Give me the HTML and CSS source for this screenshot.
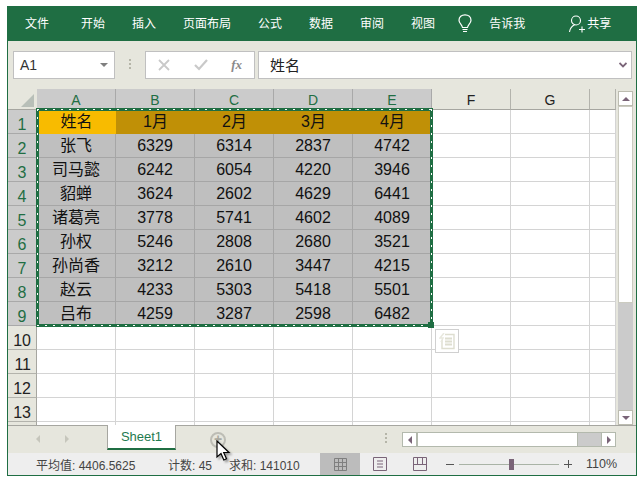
FILE: index.html
```html
<!DOCTYPE html>
<html lang="zh-CN">
<head>
    <meta charset="UTF-8">
    <title>Excel</title>
    <link rel="stylesheet" href="styles.css">
</head>
<body>
<div class="window">
    <!-- ribbon tabs -->
    <div class="ribbon">
        <span class="tab tab-first">文件</span>
        <span class="tab">开始</span>
        <span class="tab">插入</span>
        <span class="tab">页面布局</span>
        <span class="tab">公式</span>
        <span class="tab">数据</span>
        <span class="tab">审阅</span>
        <span class="tab">视图</span>
        <svg class="bulb" width="14" height="20" viewBox="0 0 14 20" fill="none" stroke="#fff" stroke-width="1.2">
            <path d="M4.5 13.5C4 10.5 1 9.5 1 6.2 1 3 3.6 .8 7 .8s6 2.200 6 5.400c0 3.300-3 4.300-3.500 7.300z"/>
            <path d="M4.500 15.500h5M5 17.500h4"/>
        </svg>
        <span class="tab tell">告诉我</span>
        <svg class="person" width="16" height="18" viewBox="0 0 16 18" fill="none" stroke="#fff" stroke-width="1.100">
            <circle cx="7" cy="5.500" r="4.500"/>
            <path d="M.5 17c.5-3.500 2.500-6 5-7M10 14.500h6M13 11.500v6"/>
        </svg>
        <span class="tab share">共享</span>
    </div>

    <!-- formula bar -->
    <div class="formula-bar">
        <div class="name-box"><span>A1</span><i class="caret"></i></div>
        <div class="grip"></div>
        <div class="fx-box">
            <svg width="12" height="12" viewBox="0 0 12 12" fill="none" stroke="#c9c9c9" stroke-width="1.800"><path d="M1 1l10 10M11 1L1 11"/></svg>
            <svg width="14" height="12" viewBox="0 0 14 12" fill="none" stroke="#c9c9c9" stroke-width="2.200"><path d="M1 6l4 4 8-9"/></svg>
            <span class="fx">fx</span>
        </div>
        <div class="formula-input">
            <span>姓名</span>
            <svg width="8" height="6" viewBox="0 0 8 6" fill="none" stroke="#7a6478" stroke-width="1.800"><path d="M.5 1l3.500 3.500L7.500 1"/></svg>
        </div>
    </div>

    <!-- sheet -->
    <div class="sheet-row">
        <div class="sheet">
            <div class="corner"><i></i></div>
            <div class="col-h on">A</div><div class="col-h on">B</div><div class="col-h on">C</div><div class="col-h on">D</div><div class="col-h on">E</div><div class="col-h">F</div><div class="col-h">G</div><div class="col-h"></div>

            <div class="row-h on">1</div><div class="c first">姓名</div><div class="c head">1月</div><div class="c head">2月</div><div class="c head">3月</div><div class="c head">4月</div><div class="e"></div><div class="e"></div><div class="e"></div>
            <div class="row-h on">2</div><div class="c">张飞</div><div class="c">6329</div><div class="c">6314</div><div class="c">2837</div><div class="c">4742</div><div class="e"></div><div class="e"></div><div class="e"></div>
            <div class="row-h on">3</div><div class="c">司马懿</div><div class="c">6242</div><div class="c">6054</div><div class="c">4220</div><div class="c">3946</div><div class="e"></div><div class="e"></div><div class="e"></div>
            <div class="row-h on">4</div><div class="c">貂蝉</div><div class="c">3624</div><div class="c">2602</div><div class="c">4629</div><div class="c">6441</div><div class="e"></div><div class="e"></div><div class="e"></div>
            <div class="row-h on">5</div><div class="c">诸葛亮</div><div class="c">3778</div><div class="c">5741</div><div class="c">4602</div><div class="c">4089</div><div class="e"></div><div class="e"></div><div class="e"></div>
            <div class="row-h on">6</div><div class="c">孙权</div><div class="c">5246</div><div class="c">2808</div><div class="c">2680</div><div class="c">3521</div><div class="e"></div><div class="e"></div><div class="e"></div>
            <div class="row-h on">7</div><div class="c">孙尚香</div><div class="c">3212</div><div class="c">2610</div><div class="c">3447</div><div class="c">4215</div><div class="e"></div><div class="e"></div><div class="e"></div>
            <div class="row-h on">8</div><div class="c">赵云</div><div class="c">4233</div><div class="c">5303</div><div class="c">5418</div><div class="c">5501</div><div class="e"></div><div class="e"></div><div class="e"></div>
            <div class="row-h on">9</div><div class="c">吕布</div><div class="c">4259</div><div class="c">3287</div><div class="c">2598</div><div class="c">6482</div><div class="e"></div><div class="e"></div><div class="e"></div>
            <div class="row-h">10</div><div class="e"></div><div class="e"></div><div class="e"></div><div class="e"></div><div class="e"></div><div class="e"></div><div class="e"></div><div class="e"></div>
            <div class="row-h">11</div><div class="e"></div><div class="e"></div><div class="e"></div><div class="e"></div><div class="e"></div><div class="e"></div><div class="e"></div><div class="e"></div>
            <div class="row-h">12</div><div class="e"></div><div class="e"></div><div class="e"></div><div class="e"></div><div class="e"></div><div class="e"></div><div class="e"></div><div class="e"></div>
            <div class="row-h">13</div><div class="e"></div><div class="e"></div><div class="e"></div><div class="e"></div><div class="e"></div><div class="e"></div><div class="e"></div><div class="e"></div>
            <div class="row-h tail"></div><div class="e tail"></div><div class="e tail"></div><div class="e tail"></div><div class="e tail"></div><div class="e tail"></div><div class="e tail"></div><div class="e tail"></div><div class="e tail"></div>

            <!-- copy marquee and paste options float over the cells -->
            <div class="marquee"><div class="marquee-dash"></div><i class="handle"></i></div>
            <div class="paste-tag">
                <svg width="16" height="17" viewBox="0 0 16 17" fill="none" stroke="#deded0">
                    <path d="M6 1.500h9v14H3V7" stroke-width="1.400"/>
                    <path d="M6 5.500h7M6 8.500h7M6 11.500h7" stroke-width="2"/>
                    <path d="M5 0L1 5h3L2 9" stroke="#e8e8de" stroke-width="1.500"/>
                </svg>
            </div>
        </div>
        <div class="vscroll">
            <div class="sb-btn"><i class="tri-up"></i></div>
            <div class="vthumb"></div>
            <div class="sb-btn"><i class="tri-down"></i></div>
        </div>
    </div>

    <!-- sheet tabs -->
    <div class="tabs-bar">
        <i class="nav-left"></i>
        <i class="nav-right"></i>
        <div class="sheet-tab">Sheet1</div>
        <div class="add-sheet">+</div>
        <div class="grip grip-tabs"></div>
        <div class="hscroll">
            <div class="sb-btn-h"><i class="tri-left"></i></div>
            <div class="hthumb"></div>
            <div class="sb-btn-h"><i class="tri-right"></i></div>
        </div>
    </div>

    <!-- status bar -->
    <div class="status">
        <span class="st-avg">平均值: 4406.5625</span>
        <span class="st-count">计数: 45</span>
        <span class="st-sum">求和: 141010</span>
        <div class="view-btn active">
            <svg width="13" height="13" viewBox="0 0 13 13" fill="none" stroke="#7f7f7f"><path d="M.5.500h12v12H.500zM.5 4.500h12M.5 8.500h12M4.500.500v12M8.500.500v12"/></svg>
        </div>
        <div class="view-btn">
            <svg width="14" height="14" viewBox="0 0 14 14" fill="none" stroke="#7a6478"><path d="M.5.500h13v13H.500zM4 4h6M4 7h6M4 10h6"/></svg>
        </div>
        <div class="view-btn">
            <svg width="14" height="14" viewBox="0 0 14 14" fill="none" stroke="#7a6478"><path d="M.5.500h13v13H.500zM.5 7.500h13M4.500.500v7M9.500.500v7"/></svg>
        </div>
        <span class="zoom-minus"></span>
        <div class="slider"><i></i></div>
        <span class="zoom-plus"></span>
        <span class="zoom-pct">110%</span>
    </div>

    <svg class="cursor" width="16" height="24" viewBox="0 0 16 24">
        <path d="M1 1v16l4-3.500 2.800 6.500 2.700-1.200-2.800-6.300H13z" fill="#fff" stroke="#000" stroke-width="1.200"/>
    </svg>
</div>
</body>
</html>
```
FILE: styles.css
```css
* {
    box-sizing: border-box;
}

html, body {
    margin: 0;
    padding: 0;
    height: 479px;
    overflow: hidden;
    background: #fff;
}

body {
    padding: 6px 0 0 7px;
    font-family: "Liberation Sans", "Noto Sans CJK SC", sans-serif;
    color: #222;
}

.window {
    position: relative;
    width: 630px;
    height: 470px;
    border: 1px solid #1f6e43;
    border-top: none;
    background: #e6e6dd;
    display: flex;
    flex-direction: column;
}

/* ribbon */
.ribbon {
    height: 35px;
    background: #1f6e43;
    display: flex;
    align-items: center;
    padding-left: 17px;
    color: #fff;
    font-size: 12px;
    flex: none;
}

.tab {
    margin-right: 27px;
    line-height: 16px;
}

.tab-first {
    margin-right: 32px;
}

.bulb {
    margin: 0 17px 0 -4px;
}

.tell {
    margin-right: 44px;
}

.person {
    margin: 0 2px 0 0;
}

.share {
    margin: 0;
}

/* formula bar */
.formula-bar {
    height: 48px;
    flex: none;
    display: flex;
    align-items: flex-start;
    padding: 10px 0 0 5px;
}

.name-box, .fx-box, .formula-input {
    height: 28px;
    background: #fff;
    border: 1px solid #c0c0c0;
    display: flex;
    align-items: center;
}

.name-box {
    width: 102px;
    padding: 0 6px;
    justify-content: space-between;
    font-size: 14px;
    color: #333;
}

.caret {
    border-top: 4px solid #7f7f7f;
    border-left: 4px solid transparent;
    border-right: 4px solid transparent;
}

.grip {
    width: 2px;
    height: 10px;
    margin: 8px 14px 0 14px;
    background: repeating-linear-gradient(#b5b5a8 0 2px, transparent 2px 4px);
    flex: none;
}

.fx-box {
    width: 110px;
    margin-right: 3px;
    padding: 0 12px;
    justify-content: space-between;
}

.fx {
    font-family: "Liberation Serif", serif;
    font-style: italic;
    font-weight: bold;
    font-size: 13px;
    color: #8a8a8a;
}

.formula-input {
    width: 374px;
    padding: 0 4px 2px 11px;
    justify-content: space-between;
    font-size: 15px;
    color: #222;
}

.formula-input svg {
    margin-top: 2px;
}

/* sheet */
.sheet-row {
    height: 336px;
    flex: none;
    display: flex;
}

.sheet {
    position: relative;
    display: grid;
    grid-template-columns: 29px repeat(7, 79px) 26px;
    grid-template-rows: 21px repeat(13, 24px) 3px;
    width: 608px;
    font-size: 16px;
}

.corner {
    position: relative;
    background: #e6e6dd;
    border-bottom: 1px solid #a6a6a0;
}

.corner i {
    position: absolute;
    right: 3px;
    bottom: 2px;
    border-bottom: 13px solid #b8bfb8;
    border-left: 13px solid transparent;
}

.col-h {
    background: #e6e6dd;
    border-right: 1px solid #b3b3ac;
    border-bottom: 1px solid #a6a6a0;
    text-align: center;
    font-size: 14px;
    line-height: 22px;
    color: #222;
}

.col-h:last-of-type {
    border-right: none;
}

.col-h.on {
    background: #cbcbcb;
    color: #1f6e43;
    border-right-color: #a9a9a9;
}

.row-h {
    background: #e6e6dd;
    border-bottom: 1px solid #b3b3ac;
    border-right: 1px solid #a6a6a0;
    text-align: right;
    padding: 7px 5px 0 0;
    font-size: 16px;
    line-height: 16px;
    color: #222;
}

.row-h.on {
    background: #cbcbcb;
    color: #1f6e43;
    border-bottom-color: #a9a9a9;
    text-align: center;
    padding-right: 0;
}

.row-h.tail, .e.tail {
    border-bottom: none;
    padding: 0;
}

.c {
    background: #bfbfbf;
    border-right: 1px solid #a6a6a6;
    border-bottom: 1px solid #a6a6a6;
    text-align: center;
    line-height: 23px;
    color: #111;
}

.c.first {
    background: #f8bb00;
    border: none;
}

.c.head {
    background: #c09006;
    border: none;
}

.e {
    background: #fff;
    border-right: 1px solid #d4d4d4;
    border-bottom: 1px solid #d4d4d4;
}

.marquee {
    position: absolute;
    left: 28px;
    top: 19px;
    width: 397px;
    height: 219px;
    border: 3px solid #1f6e43;
}

/* white dots run along the middle of the green border */
.marquee-dash {
    position: absolute;
    inset: -2px;
    background:
        repeating-linear-gradient(90deg, #fff 0 2px, transparent 2px 8px) top / 100% 1px no-repeat,
        repeating-linear-gradient(90deg, #fff 0 2px, transparent 2px 8px) bottom / 100% 1px no-repeat,
        repeating-linear-gradient(#fff 0 2px, transparent 2px 8px) left / 1px 100% no-repeat,
        repeating-linear-gradient(#fff 0 2px, transparent 2px 8px) right / 1px 100% no-repeat;
}

.handle {
    position: absolute;
    right: -4px;
    bottom: -4px;
    width: 6px;
    height: 6px;
    background: #1f6e43;
}

.paste-tag {
    position: absolute;
    left: 427px;
    top: 240px;
    width: 24px;
    height: 24px;
    background: #fff;
    border: 1px solid #d0d0d0;
    display: flex;
    align-items: center;
    justify-content: center;
}

/* scrollbars */
.vscroll {
    width: 15px;
    margin: 2px 0 0 2px;
    display: flex;
    flex-direction: column;
    background: #cbcbcb;
}

.sb-btn {
    height: 15px;
    flex: none;
    background: #fff;
    border: 1px solid #bcbcb0;
    display: flex;
    align-items: center;
    justify-content: center;
}

.vthumb {
    height: 197px;
    margin-bottom: auto;
    background: #fff;
    border: 1px solid #cbcbc0;
}

.tri-up {
    border-bottom: 4px solid #7a6478;
    border-left: 4px solid transparent;
    border-right: 4px solid transparent;
}

.tri-down {
    border-top: 4px solid #7a6478;
    border-left: 4px solid transparent;
    border-right: 4px solid transparent;
}

/* sheet tabs */
.tabs-bar {
    position: relative;
    height: 28px;
    flex: none;
    display: flex;
    align-items: flex-start;
    border-top: 1px solid #a6a6a0;
}

.nav-left {
    margin: 9px 0 0 28px;
    border-right: 4px solid #c6c6bc;
    border-top: 4px solid transparent;
    border-bottom: 4px solid transparent;
}

.nav-right {
    margin: 9px 0 0 25px;
    border-left: 4px solid #c6c6bc;
    border-top: 4px solid transparent;
    border-bottom: 4px solid transparent;
}

.sheet-tab {
    width: 69px;
    height: 25px;
    margin: -1px 0 0 38px;
    background: #fff;
    border: 1px solid #a6a6a0;
    border-top: none;
    border-bottom: 2px solid #1f6e43;
    text-align: center;
    font-size: 13px;
    line-height: 24px;
    color: #1f7a50;
}

.add-sheet {
    width: 16px;
    height: 16px;
    margin: 6px 0 0 34px;
    border: 2px solid #bdbdb5;
    border-radius: 50%;
    text-align: center;
    font-size: 14px;
    line-height: 11px;
    font-weight: bold;
    color: #a9a9a0;
}

.grip-tabs {
    margin: 7px 0 0 0;
    position: absolute;
    left: 377px;
    top: 0;
}

.hscroll {
    position: absolute;
    left: 394px;
    top: 6px;
    width: 214px;
    height: 15px;
    display: flex;
    background: #cbcbcb;
    border: 1px solid #b3b9ad;
}

.sb-btn-h {
    width: 14px;
    flex: none;
    background: #fff;
    display: flex;
    align-items: center;
    justify-content: center;
}

.hthumb {
    width: 161px;
    margin-right: auto;
    background: #fff;
    border-left: 1px solid #b3b9ad;
    border-right: 1px solid #b3b9ad;
}

.sb-btn-h:first-child {
    border-right: 1px solid #b3b9ad;
}

.sb-btn-h:last-child {
    border-left: 1px solid #b3b9ad;
}

.tri-left {
    border-right: 4px solid #7a6478;
    border-top: 4px solid transparent;
    border-bottom: 4px solid transparent;
}

.tri-right {
    border-left: 4px solid #7a6478;
    border-top: 4px solid transparent;
    border-bottom: 4px solid transparent;
}

/* status bar */
.status {
    flex: 1;
    display: flex;
    align-items: center;
    background: #eeeeee;
    font-size: 12px;
    color: #444;
}

.st-avg {
    margin-left: 28px;
    width: 132px;
}

.st-count {
    width: 61px;
}

.st-sum {
    width: 91px;
}

.view-btn {
    width: 40px;
    height: 100%;
    display: flex;
    align-items: center;
    justify-content: center;
    flex: none;
}

.view-btn.active {
    background: #bcbcbc;
}

.zoom-minus {
    width: 8px;
    height: 1px;
    margin-left: 6px;
    background: #555;
}

.slider {
    position: relative;
    width: 100px;
    height: 1px;
    margin: 0 5px;
    background: #a9b3a6;
}

.slider i {
    position: absolute;
    left: 50px;
    top: -5px;
    width: 5px;
    height: 11px;
    background: #7a6478;
}

.zoom-plus {
    width: 8px;
    height: 8px;
    margin-right: 14px;
    background:
        linear-gradient(#555, #555) center / 8px 1px no-repeat,
        linear-gradient(#555, #555) center / 1px 8px no-repeat;
}

.zoom-pct {
    font-size: 12.500px;
}

.cursor {
    position: absolute;
    left: 208px;
    top: 434px;
    filter: drop-shadow(2px 2px 1px rgba(0, 0, 0, 0.35));
}
```
